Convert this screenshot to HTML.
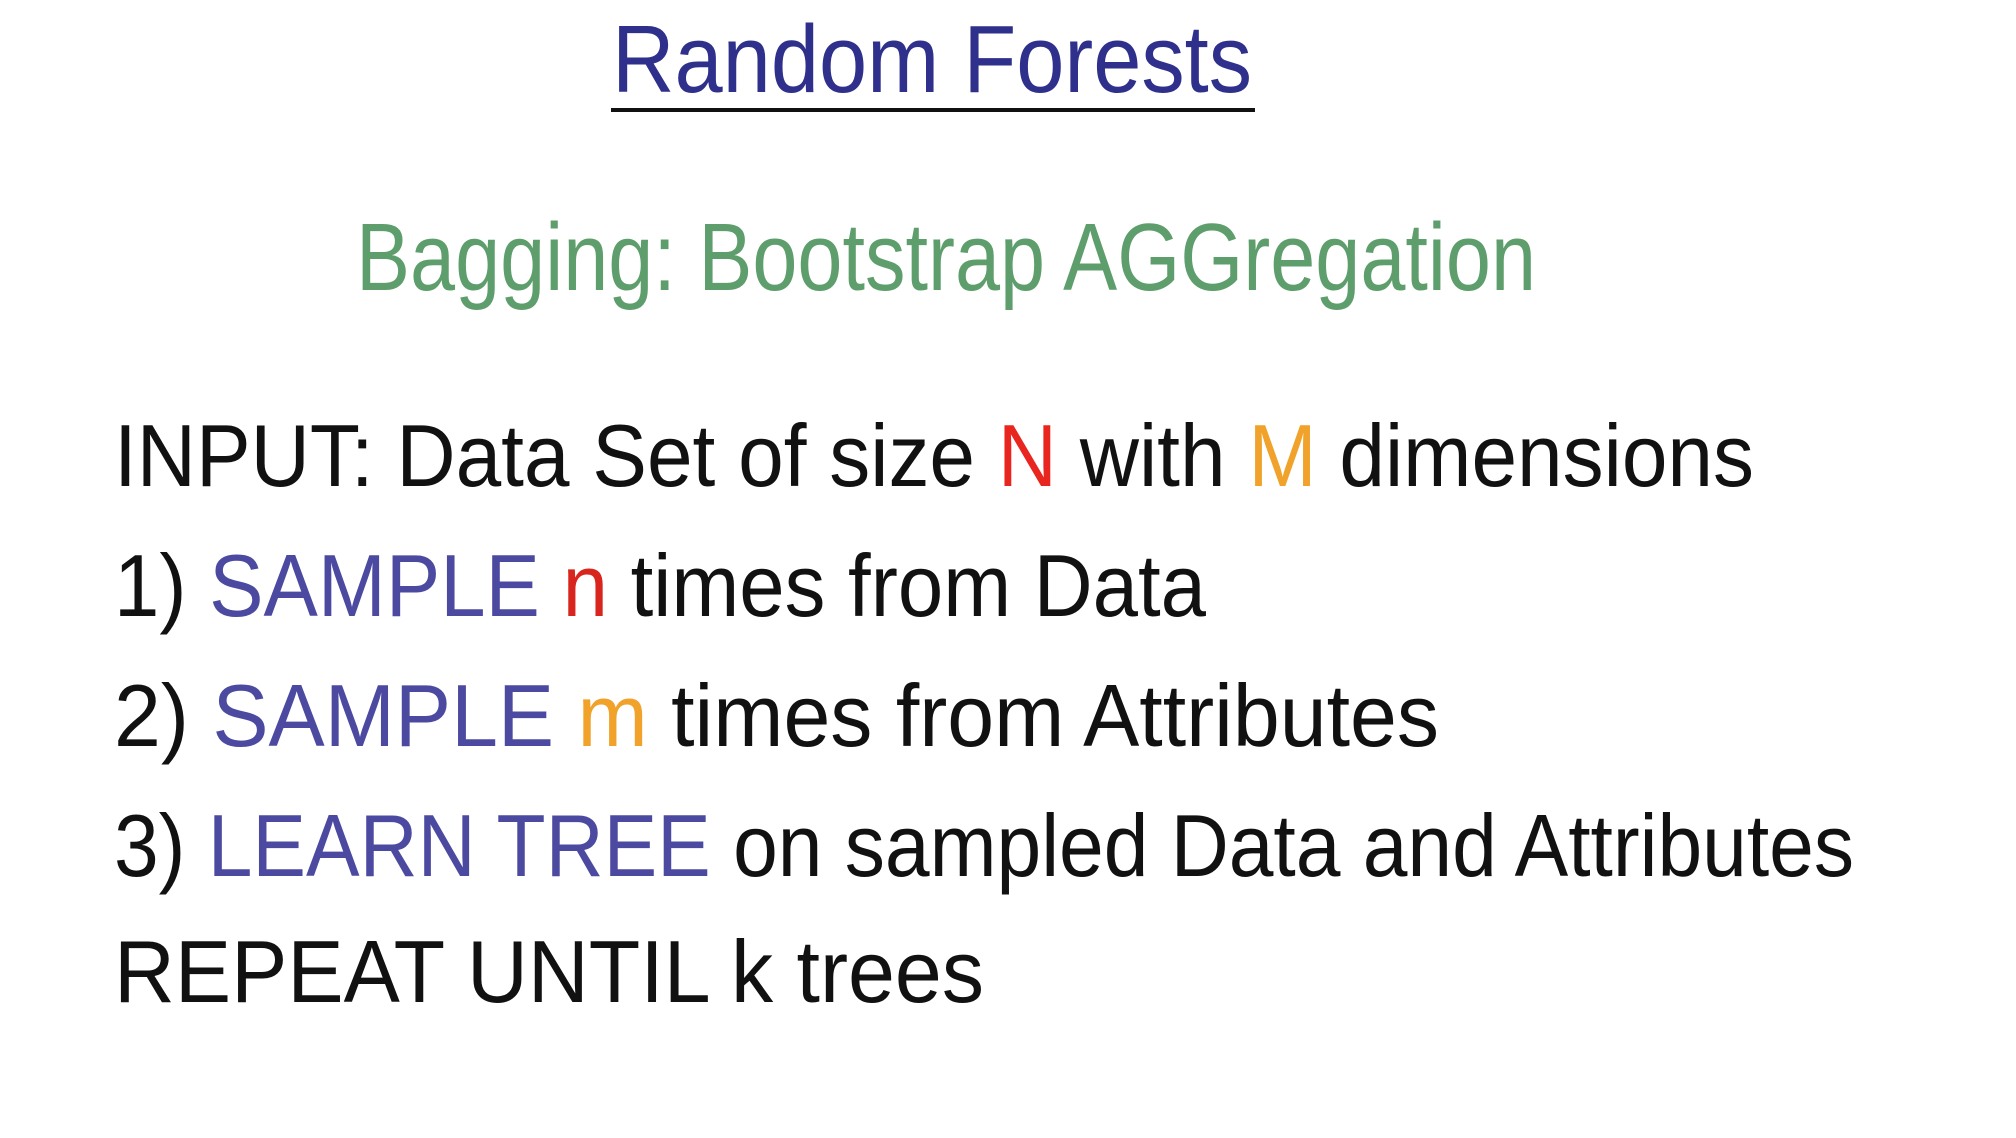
<!DOCTYPE html>
<html><head><meta charset="utf-8"><style>
html,body{margin:0;padding:0;background:#fff;}
svg{display:block}
text{font-family:"Liberation Sans",sans-serif;}
</style></head><body>
<svg width="2016" height="1138" viewBox="0 0 2016 1138" xmlns="http://www.w3.org/2000/svg">
<rect width="2016" height="1138" fill="#fff"/>
<text x="612" y="92" font-size="96" fill="#2f2f8c" textLength="640" lengthAdjust="spacingAndGlyphs">Random Forests</text>
<line x1="611" y1="110" x2="1255" y2="110" stroke="#111" stroke-width="4"/>
<text x="356" y="290" font-size="96" fill="#5e9e6c" textLength="1180" lengthAdjust="spacingAndGlyphs">Bagging: Bootstrap AGGregation</text>
<text x="114" y="486" font-size="88" fill="#111" textLength="1640" lengthAdjust="spacingAndGlyphs">INPUT: Data Set of size <tspan fill="#e8251e">N</tspan> with <tspan fill="#f0a22a">M</tspan> dimensions</text>
<text x="114" y="616" font-size="88" fill="#111" textLength="1092" lengthAdjust="spacingAndGlyphs">1) <tspan fill="#4c4aa0">SAMPLE</tspan> <tspan fill="#d8261e">n</tspan> times from Data</text>
<text x="114" y="746" font-size="88" fill="#111" textLength="1325" lengthAdjust="spacingAndGlyphs">2) <tspan fill="#4c4aa0">SAMPLE</tspan> <tspan fill="#f0a22a">m</tspan> times from Attributes</text>
<text x="114" y="876" font-size="88" fill="#111" textLength="1740" lengthAdjust="spacingAndGlyphs">3) <tspan fill="#4c4aa0">LEARN TREE</tspan> on sampled Data and Attributes</text>
<text x="114" y="1002" font-size="88" fill="#111" textLength="870" lengthAdjust="spacingAndGlyphs">REPEAT UNTIL k trees</text>
</svg>
</body></html>
